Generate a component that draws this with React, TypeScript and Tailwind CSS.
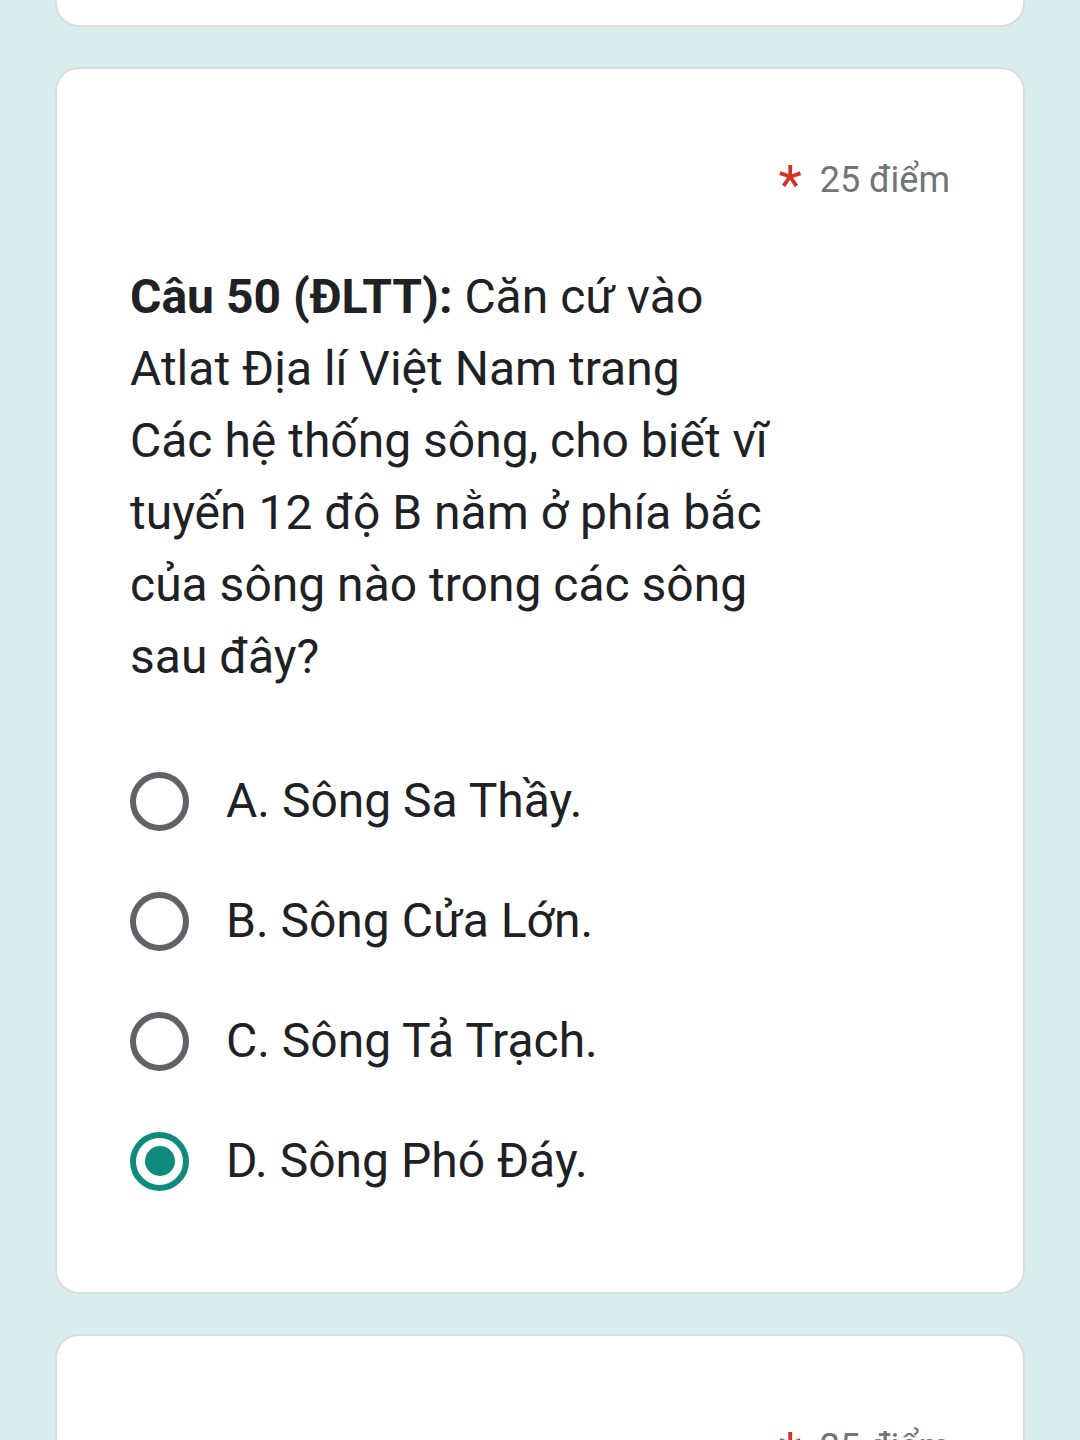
function Radio({ checked }: { checked?: boolean }) {
  if (checked) {
    return (
      <div className="w-[59px] h-[59px] rounded-full border-[6px] border-[#0f8a7c] flex items-center justify-center shrink-0">
        <div className="w-[30px] h-[30px] rounded-full bg-[#0f8a7c]"></div>
      </div>
    );
  }
  return <div className="w-[59px] h-[59px] rounded-full border-[6px] border-[#5f6368] shrink-0"></div>;
}

const options = [
  { label: "A. Sông Sa Thầy.", checked: false },
  { label: "B. Sông Cửa Lớn.", checked: false },
  { label: "C. Sông Tả Trạch.", checked: false },
  { label: "D. Sông Phó Đáy.", checked: true },
];

function Points() {
  return (
    <div className="flex justify-end items-center h-[48px] text-[36px] text-[#70757a]">
      <span className="text-[#d93025] text-[54px] leading-none mt-[10px] mr-[18px]">*</span>
      <span>25 điểm</span>
    </div>
  );
}

export default function App() {
  return (
    <div
      className="w-[1080px] h-[1440px] overflow-hidden bg-[#d9eeec] px-[55px] flex flex-col gap-[40px]"
      style={{ fontFamily: "Roboto, 'Noto Sans', sans-serif" }}
    >
      <div className="h-[27px] shrink-0 bg-white border-x-2 border-b-2 border-[#dadce0] rounded-b-[24px]"></div>

      <div className="shrink-0 bg-white border-2 border-[#dadce0] rounded-[24px] pt-[87px] pb-[71px] pl-[73px] pr-[73px]">
        <Points />
        <p className="mt-[57px] text-[48px] leading-[72px] text-[#202124]">
          <span className="font-bold">Câu 50 (ĐLTT):</span> Căn cứ vào
          <br />
          Atlat Địa lí Việt Nam trang
          <br />
          Các hệ thống sông, cho biết vĩ
          <br />
          tuyến 12 độ B nằm ở phía bắc
          <br />
          của sông nào trong các sông
          <br />
          sau đây?
        </p>
        <div className="mt-[48px] flex flex-col">
          {options.map((o) => (
            <div key={o.label} className="h-[120px] flex items-center gap-[37px]">
              <Radio checked={o.checked} />
              <span className="text-[48px] text-[#202124]">{o.label}</span>
            </div>
          ))}
        </div>
      </div>

      <div className="shrink-0 h-[200px] bg-white border-2 border-[#dadce0] rounded-[24px] pt-[87px] pl-[73px] pr-[73px]">
        <Points />
      </div>
    </div>
  );
}
